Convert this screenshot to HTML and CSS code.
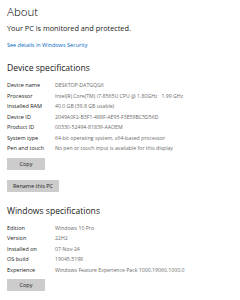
FILE: index.html
```html
<!DOCTYPE html>
<html lang="en">
<head>
    <meta charset="UTF-8">
    <meta name="viewport" content="width=device-width, initial-scale=1.0">
    <title>About</title>
    <link rel="stylesheet" href="styles.css">
</head>
<body>
    <div class="page">
        <h1>About</h1>
        <p class="status">Your PC is monitored and protected.</p>
        <a class="link" href="#">See details in Windows Security</a>

        <h2>Device specifications</h2>
        <div class="specs">
            <span class="label">Device name</span><span class="value">DESKTOP-DATGQG6</span>
            <span class="label">Processor</span><span class="value">Intel(R) Core(TM) i7-8565U CPU @ 1.80GHz&nbsp;&nbsp;&nbsp;1.99 GHz</span>
            <span class="label">Installed RAM</span><span class="value">40.0 GB (39.8 GB usable)</span>
            <span class="label">Device ID</span><span class="value">2049A0F2-B3F1-488F-AE95-F3E59BC5D56D</span>
            <span class="label">Product ID</span><span class="value">00330-52494-81839-AAOEM</span>
            <span class="label">System type</span><span class="value">64-bit operating system, x64-based processor</span>
            <span class="label">Pen and touch</span><span class="value">No pen or touch input is available for this display</span>
        </div>
        <button class="btn copy">Copy</button>
        <button class="btn rename">Rename this PC</button>

        <h2 class="win">Windows specifications</h2>
        <div class="specs">
            <span class="label">Edition</span><span class="value">Windows 10 Pro</span>
            <span class="label">Version</span><span class="value">22H2</span>
            <span class="label">Installed on</span><span class="value">07-Nov-24</span>
            <span class="label">OS build</span><span class="value">19045.5198</span>
            <span class="label">Experience</span><span class="value">Windows Feature Experience Pack 1000.19060.1000.0</span>
        </div>
        <button class="btn copy">Copy</button>
    </div>
</body>
</html>
```
FILE: styles.css
```css
body {
    margin: 0;
    background: #fff;
    font-family: 'Open Sans', 'Noto Sans', sans-serif;
    color: #1a1a1a;
}

.page {
    padding: 4px 7px 0 7px;
    display: flex;
    flex-direction: column;
    align-items: flex-start;
}

h1 {
    font-size: 11.5px;
    font-weight: 300;
    line-height: 16px;
    color: #000;
    margin: 0;
}

.status {
    font-size: 7.3px;
    line-height: 12px;
    margin: 2px 0 0 0;
}

.link {
    font-size: 5.5px;
    line-height: 8px;
    color: #0067c0;
    text-decoration: none;
    margin-top: 7px;
}

h2 {
    font-size: 8.6px;
    font-weight: 400;
    line-height: 14px;
    margin: 12px 0 5px 0;
}

h2.win {
    margin-top: 12px;
}

.specs {
    display: grid;
    grid-template-columns: 48px auto;
    grid-auto-rows: 10.5px;
    align-items: center;
    white-space: nowrap;
}

.label {
    font-size: 5.5px;
    color: #1a1a1a;
}

.value {
    font-size: 5.2px;
    color: #6a6a6a;
}

.btn {
    font-family: inherit;
    font-size: 5.5px;
    color: #1a1a1a;
    background: #cccccc;
    border: none;
    padding: 0;
    height: 12px;
    cursor: pointer;
}

.copy {
    width: 38px;
    margin-top: 4px;
}

.rename {
    width: 52px;
    margin-top: 10px;
}
```
